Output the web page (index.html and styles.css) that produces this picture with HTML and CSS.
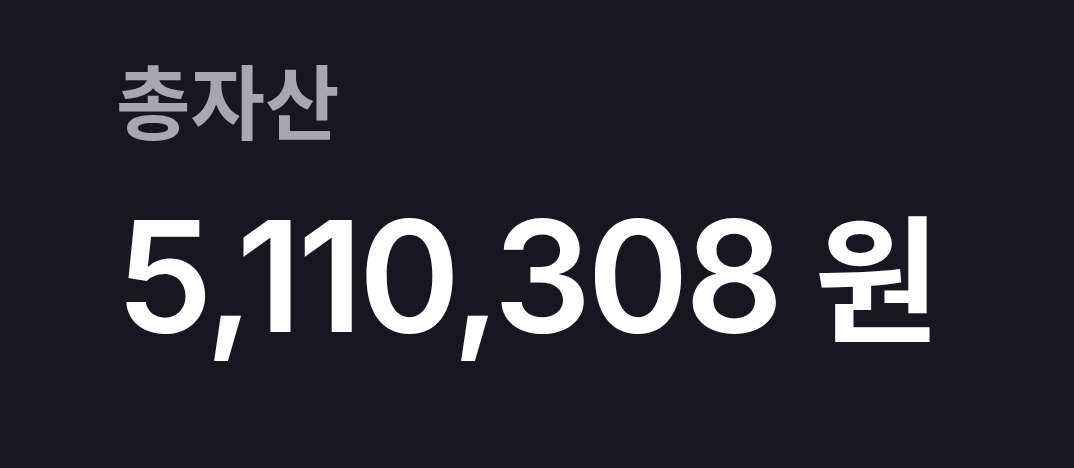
FILE: index.html
```html
<!DOCTYPE html>
<html lang="ko">
<head>
<meta charset="utf-8">
<link rel="stylesheet" href="styles.css">
</head>
<body>
<main class="asset">
  <div class="label">총자산</div>
  <div class="amount"><span class="num">5,110,308</span> <span class="unit">원</span></div>
</main>
</body>
</html>
```
FILE: styles.css
```css
html, body {
  margin: 0;
  padding: 0;
  background: #18171f;
  width: 1074px;
  height: 468px;
  overflow: hidden;
}
.asset {
  display: flex;
  flex-direction: column;
  padding: 48px 0 0 116px;
  font-family: Inter, "Noto Sans CJK KR", sans-serif;
}
.label {
  font-family: "Noto Sans CJK KR", sans-serif;
  font-weight: 700;
  font-size: 81px;
  line-height: 100px;
  color: #a7a7ad;
}
.amount {
  margin-top: 44px;
  font-size: 154px;
  line-height: 160px;
  font-weight: 600;
  color: #ffffff;
  letter-spacing: -4px;
  white-space: nowrap;
}
.unit {
  font-family: "Noto Sans CJK KR", sans-serif;
  font-weight: 700;
  font-size: 137px;
  letter-spacing: 0;
}
```
